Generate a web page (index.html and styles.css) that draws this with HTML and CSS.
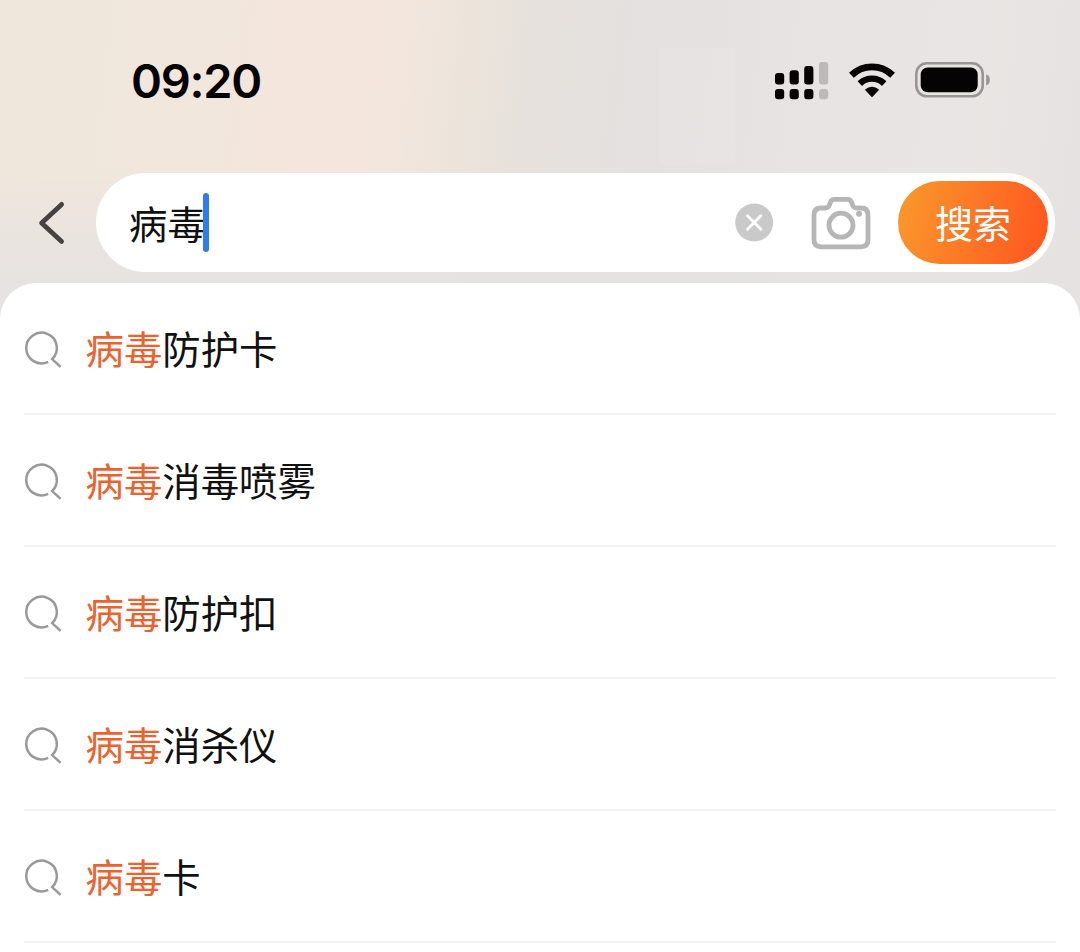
FILE: index.html
```html
<!DOCTYPE html>
<html lang="zh-CN">
<head>
<meta charset="utf-8">
<title>搜索</title>
<link rel="stylesheet" href="styles.css">
</head>
<body>
<svg class="symbols" width="0" height="0">
  <symbol id="search" viewBox="0 0 40 40">
    <path d="M24.2 33.8A15.3 15.3 0 1 1 28.1 31.1L36.6 38.9"/>
  </symbol>
</svg>
<main class="screen">
  <header class="status">
    <time class="clock">09:20</time>
    <div class="indicators">
      <svg class="signal" width="54" height="38" viewBox="0 0 54 38">
        <g fill="#050303">
          <rect x="0" y="11" width="9.2" height="11.6" rx="3"/>
          <rect x="14.6" y="8.2" width="9.2" height="14.4" rx="3"/>
          <rect x="29.2" y="4" width="9.2" height="18.6" rx="3"/>
          <rect x="0" y="26.9" width="9.2" height="10.4" rx="3"/>
          <rect x="14.6" y="26.9" width="9.2" height="10.4" rx="3"/>
          <rect x="29.2" y="26.9" width="9.2" height="10.4" rx="3"/>
        </g>
        <g fill="#bdb9b9">
          <rect x="44" y="0" width="9.2" height="22.6" rx="3"/>
          <rect x="44" y="26.9" width="9.2" height="10.4" rx="3"/>
        </g>
      </svg>
      <svg class="wifi" width="46" height="35" viewBox="0 0 46 35">
        <path d="M2.4 12.2C14 1 32 1 43.6 12.2" fill="none" stroke="#050303" stroke-width="6.8"/>
        <path d="M10.8 20.6C17.5 14 28.5 14 35.2 20.6" fill="none" stroke="#050303" stroke-width="6.4"/>
        <path d="M15.8 26.8Q23 20.8 30.2 26.8L23 34.2Z" fill="#050303"/>
      </svg>
      <svg class="battery" width="76" height="36" viewBox="0 0 76 36">
        <rect x="1.3" y="1.3" width="66.4" height="33" rx="10.5" fill="none" stroke="#999595" stroke-width="2.6"/>
        <rect x="5.7" y="5.5" width="57" height="24.8" rx="7" fill="#050303"/>
        <path d="M71.2 12.2Q74.8 13.6 74.8 17.9T71.2 23.6Z" fill="#999595"/>
      </svg>
    </div>
  </header>

  <form class="searchbar">
    <svg class="back" width="30" height="44" viewBox="0 0 30 44">
      <path d="M25.6 3.4L5.6 21.9L25.6 40.4" fill="none" stroke="#454241" stroke-width="4.8" stroke-linecap="round" stroke-linejoin="round"/>
    </svg>
    <div class="field">
      <span class="query">病毒</span><span class="caret"></span>
      <svg class="clear" width="39" height="39" viewBox="0 0 39 39">
        <circle cx="19.2" cy="19.5" r="19" fill="#c9c9c9"/>
        <path d="M12.5 12.8L25.9 26.2M25.9 12.8L12.5 26.2" stroke="#fff" stroke-width="2.9" stroke-linecap="round"/>
      </svg>
      <svg class="camera" width="60" height="54" viewBox="0 0 60 54">
        <path d="M10 12H14.5Q17.3 12 18.2 9.5L19.3 6.5Q20.3 3.4 23.5 3.4H36.5Q39.7 3.4 40.7 6.5L41.8 9.5Q42.7 12 45.5 12H50Q57 12 57 19V43.8Q57 50.8 50 50.8H10Q3 50.8 3 43.8V19Q3 12 10 12Z" fill="none" stroke="#b6b6b6" stroke-width="4.8"/>
        <circle cx="30" cy="29.2" r="12" fill="none" stroke="#b6b6b6" stroke-width="4.8"/>
        <circle cx="48" cy="17.8" r="3" fill="#b6b6b6"/>
      </svg>
      <button class="submit" type="button">搜索</button>
    </div>
  </form>

  <ul class="suggestions">
    <li class="item"><svg class="glass"><use href="#search"/></svg><span class="label"><em>病毒</em>防护卡</span></li>
    <li class="item"><svg class="glass"><use href="#search"/></svg><span class="label"><em>病毒</em>消毒喷雾</span></li>
    <li class="item"><svg class="glass"><use href="#search"/></svg><span class="label"><em>病毒</em>防护扣</span></li>
    <li class="item"><svg class="glass"><use href="#search"/></svg><span class="label"><em>病毒</em>消杀仪</span></li>
    <li class="item"><svg class="glass"><use href="#search"/></svg><span class="label"><em>病毒</em>卡</span></li>
  </ul>
</main>
</body>
</html>
```
FILE: styles.css
```css
* { box-sizing: border-box; }
body {
  margin: 0;
  font-family: "Noto Sans CJK SC", sans-serif;
  color: #111;
}
.symbols { display: block; }
.screen {
  width: 1080px;
  height: 952px;
  overflow: hidden;
  background:
    linear-gradient(180deg, rgba(229,226,226,0) 165px, rgba(229,226,226,.9) 285px) 0 0 / 1080px 330px no-repeat,
    linear-gradient(rgba(235,231,233,.3), rgba(235,231,233,.3)) 659px 48px / 76px 117px no-repeat,
    linear-gradient(97deg, #f0e7dc 0, #f1e7dc 18%, #f4e6dd 27%, #f3e6dd 36%, #ebe4db 43%, #e6e1dc 48%, #e4e0de 56%, #e5e1e1 63%, #e7e4e3 75%, #e8e5e3 90%, #e6e1e2 100%) 0 0 / 1080px 330px no-repeat,
    #fff;
}
.status {
  height: 173px;
  padding: 51px 89px 0 131px;
  display: flex;
  justify-content: space-between;
  align-items: flex-start;
}
.clock {
  font: 600 47px/60px Inter, sans-serif;
  letter-spacing: -1.3px;
  color: #050303;
}
.indicators { display: flex; align-items: flex-start; padding-top: 11px; }
.wifi { margin: 1px 0 0 20px; }
.battery { margin: 0 0 0 20px; }
.searchbar {
  height: 110px;
  margin: 0;
  padding: 0 25px 0 36px;
  display: flex;
  align-items: flex-start;
}
.back { margin: 28px 30px 0 0; flex: none; }
.field {
  flex: 1;
  height: 99px;
  padding: 0 7px 0 33px;
  border-radius: 50px;
  background: #fff;
  display: flex;
  align-items: center;
}
.query { font-size: 38.4px; line-height: 56px; margin-bottom: 2px; }
.caret {
  width: 6px;
  height: 59px;
  margin-left: -3px;
  border-radius: 3px;
  background: #2f7bf0;
}
.clear { margin-left: auto; }
.camera { margin-left: 37px; }
.submit {
  width: 150px;
  height: 83px;
  margin-left: 27px;
  padding: 0 0 2px;
  border: 0;
  border-radius: 42px;
  background: linear-gradient(105deg, #fb962b 5%, #fe5a20 92%);
  color: #fff;
  font: 400 38px/56px "Noto Sans CJK SC", sans-serif;
}
.suggestions {
  height: 669px;
  margin: 0;
  padding: 0 24px;
  list-style: none;
  background: #fff;
  border-radius: 36px 36px 0 0;
}
.item {
  height: 132px;
  display: flex;
  align-items: center;
  border-bottom: 2px solid #f1f1f1;
  font-size: 38.4px;
  line-height: 56px;
}
.label { margin-bottom: 2px; }
.glass {
  width: 40px;
  height: 40px;
  margin: 0 21.5px 0 0;
  fill: none;
  stroke: #989898;
  stroke-width: 2.5;
}
em { font-style: normal; color: #ea632f; }
```
